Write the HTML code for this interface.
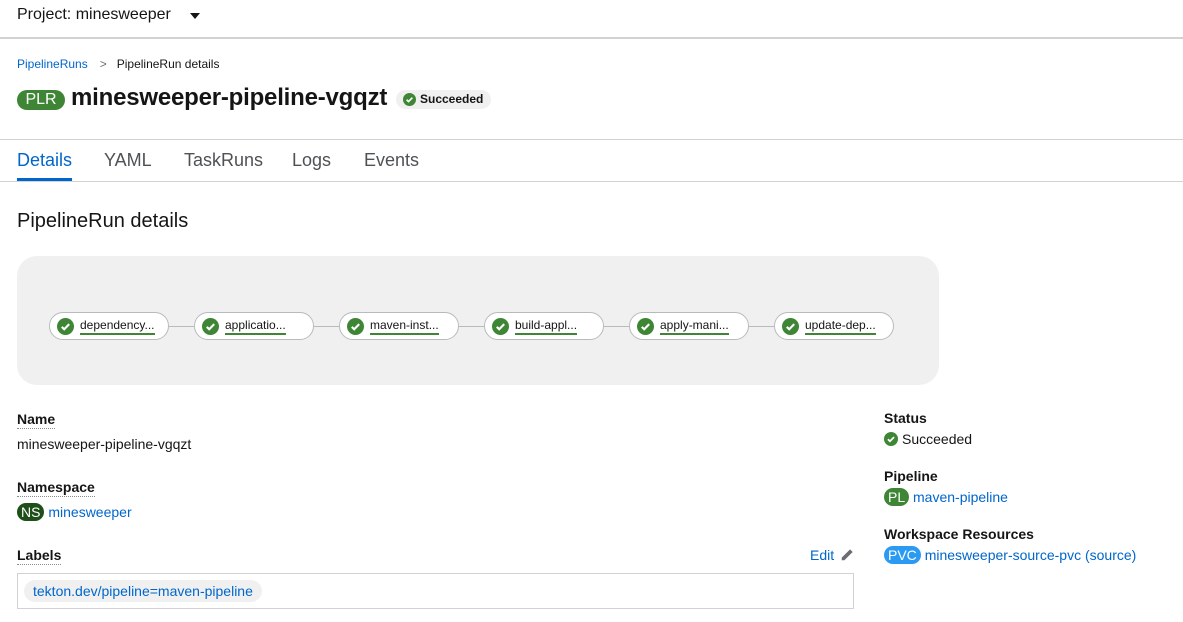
<!DOCTYPE html>
<html><head><meta charset="utf-8"><style>
*{margin:0;padding:0;box-sizing:border-box}
body{width:1183px;height:622px;overflow:hidden;background:#fff;font-family:"Liberation Sans",sans-serif;color:#151515;position:relative}
.a{position:absolute;white-space:nowrap}
.link{color:#0066cc}
.badge{display:inline-block;color:#fff;border-radius:10px;padding:0 4px;font-size:14px;line-height:18px}
.lbl{font-size:14px;font-weight:bold;border-bottom:1px dotted #8a8d90;padding-bottom:1px}
.node{position:absolute;top:312px;width:120px;height:28px;border:1px solid #b8bbbe;border-radius:14px;background:#fff;font-size:12px}
.node svg{position:absolute;left:7px;top:5px}
.node span{position:absolute;left:30px;top:6px;border-bottom:2px solid #3e8635;padding-bottom:1px;line-height:13px}
.line{position:absolute;top:326px;height:1px;background:#b8bbbe;width:25px}
</style></head><body>
<div class="a" style="left:17px;top:6px;font-size:16px">Project: minesweeper</div>
<div class="a" style="left:190px;top:13px;width:0;height:0;border-left:5px solid transparent;border-right:5px solid transparent;border-top:6px solid #151515"></div>
<div class="a" style="left:0;top:37px;width:1183px;height:2px;background:#d2d2d2"></div>
<div class="a" style="left:17px;top:57px;font-size:12px"><span class="link">PipelineRuns</span><span style="color:#6a6e73;margin:0 10px 0 12px">&gt;</span>PipelineRun details</div>
<div class="a" style="left:17px;top:90px;width:48px;height:20px;border-radius:10px;background:#3e8635;color:#fff;font-size:16px;text-align:center;line-height:20px">PLR</div>
<div class="a" style="left:71px;top:84px;font-size:24px;font-weight:bold;letter-spacing:-0.2px">minesweeper-pipeline-vgqzt</div>
<div class="a" style="left:396px;top:90px;width:95px;height:19px;border-radius:10px;background:#f0f0f0;font-size:12px;line-height:19px;padding-left:24px;font-weight:bold">Succeeded</div>
<svg class="a" style="left:403px;top:93px" width="13" height="13" viewBox="0 0 16 16"><circle cx="8" cy="8" r="8" fill="#3e8635"/><path d="M4.5 8.3l2.3 2.3 4.7-4.8" stroke="#fff" stroke-width="2" fill="none"/></svg>
<div class="a" style="left:0;top:139px;width:1183px;height:1px;background:#d2d2d2"></div>
<div class="a" style="left:17px;top:150px;font-size:18px;color:#0066cc">Details</div>
<div class="a" style="left:104px;top:150px;font-size:18px;color:#4f5255">YAML</div>
<div class="a" style="left:184px;top:150px;font-size:18px;color:#4f5255">TaskRuns</div>
<div class="a" style="left:292px;top:150px;font-size:18px;color:#4f5255">Logs</div>
<div class="a" style="left:364px;top:150px;font-size:18px;color:#4f5255">Events</div>
<div class="a" style="left:17px;top:178px;width:55px;height:3px;background:#0066cc"></div>
<div class="a" style="left:0;top:181px;width:1183px;height:1px;background:#d2d2d2"></div>
<div class="a" style="left:17px;top:210px;font-size:20px">PipelineRun details</div>
<div class="a" style="left:17px;top:256px;width:922px;height:129px;border-radius:20px;background:#f0f0f0"></div>
<div class="line" style="left:169px"></div><div class="line" style="left:314px"></div><div class="line" style="left:459px"></div><div class="line" style="left:604px"></div><div class="line" style="left:749px"></div>
<div class="node" style="left:49px"><svg width="17" height="17" viewBox="0 0 16 16"><circle cx="8" cy="8" r="8" fill="#3e8635"/><path d="M4.5 8.3l2.3 2.3 4.7-4.8" stroke="#fff" stroke-width="2" fill="none"/></svg><span>dependency...</span></div>
<div class="node" style="left:194px"><svg width="17" height="17" viewBox="0 0 16 16"><circle cx="8" cy="8" r="8" fill="#3e8635"/><path d="M4.5 8.3l2.3 2.3 4.7-4.8" stroke="#fff" stroke-width="2" fill="none"/></svg><span>applicatio...</span></div>
<div class="node" style="left:339px"><svg width="17" height="17" viewBox="0 0 16 16"><circle cx="8" cy="8" r="8" fill="#3e8635"/><path d="M4.5 8.3l2.3 2.3 4.7-4.8" stroke="#fff" stroke-width="2" fill="none"/></svg><span>maven-inst...</span></div>
<div class="node" style="left:484px"><svg width="17" height="17" viewBox="0 0 16 16"><circle cx="8" cy="8" r="8" fill="#3e8635"/><path d="M4.5 8.3l2.3 2.3 4.7-4.8" stroke="#fff" stroke-width="2" fill="none"/></svg><span>build-appl...</span></div>
<div class="node" style="left:629px"><svg width="17" height="17" viewBox="0 0 16 16"><circle cx="8" cy="8" r="8" fill="#3e8635"/><path d="M4.5 8.3l2.3 2.3 4.7-4.8" stroke="#fff" stroke-width="2" fill="none"/></svg><span>apply-mani...</span></div>
<div class="node" style="left:774px"><svg width="17" height="17" viewBox="0 0 16 16"><circle cx="8" cy="8" r="8" fill="#3e8635"/><path d="M4.5 8.3l2.3 2.3 4.7-4.8" stroke="#fff" stroke-width="2" fill="none"/></svg><span>update-dep...</span></div>
<div class="a lbl" style="left:17px;top:411px">Name</div>
<div class="a" style="left:17px;top:436px;font-size:14px">minesweeper-pipeline-vgqzt</div>
<div class="a lbl" style="left:17px;top:479px">Namespace</div>
<div class="a" style="left:17px;top:503px;font-size:14px"><span class="badge" style="background:#1e4f18">NS</span> <span class="link">minesweeper</span></div>
<div class="a lbl" style="left:17px;top:547px">Labels</div>
<div class="a link" style="left:810px;top:547px;font-size:14px">Edit</div>
<svg class="a" style="left:840px;top:548px" width="14" height="14" viewBox="0 0 16 16"><path d="M11.5 1.5l3 3L5 14H2v-3z" fill="#6a6e73"/></svg>
<div class="a" style="left:17px;top:573px;width:837px;height:36px;border:1px solid #d2d2d2"></div>
<div class="a link" style="left:24px;top:580px;height:22px;border-radius:11px;background:#f0f0f0;padding:0 9px;line-height:22px;font-size:14px">tekton.dev/pipeline=maven-pipeline</div>
<div class="a lbl" style="left:884px;top:410px;border:none">Status</div>
<svg class="a" style="left:884px;top:432px" width="14" height="14" viewBox="0 0 16 16"><circle cx="8" cy="8" r="8" fill="#3e8635"/><path d="M4.5 8.3l2.3 2.3 4.7-4.8" stroke="#fff" stroke-width="2" fill="none"/></svg>
<div class="a" style="left:902px;top:431px;font-size:14px">Succeeded</div>
<div class="a lbl" style="left:884px;top:468px;border:none">Pipeline</div>
<div class="a" style="left:884px;top:488px;font-size:14px"><span class="badge" style="background:#3e8635">PL</span> <span class="link">maven-pipeline</span></div>
<div class="a lbl" style="left:884px;top:526px;border:none">Workspace Resources</div>
<div class="a" style="left:884px;top:546px;font-size:14px"><span class="badge" style="background:#2b9af3">PVC</span> <span class="link">minesweeper-source-pvc (source)</span></div>
</body></html>
